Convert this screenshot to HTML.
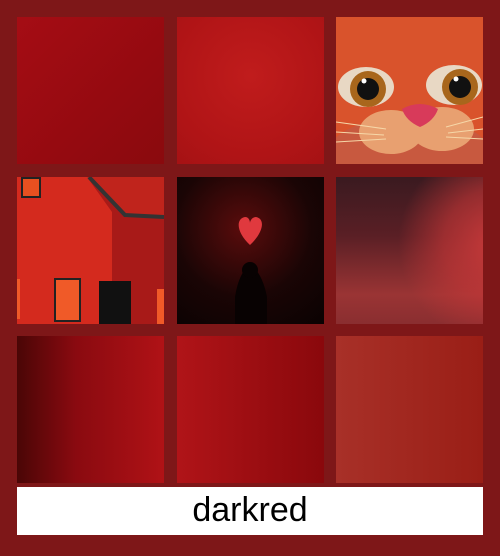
<!DOCTYPE html><html><head><style>
body{margin:0;width:500px;height:556px;background:#7e1718;position:relative;overflow:hidden;font-family:"Liberation Sans",sans-serif}
.t{position:absolute;width:147px;height:147px;overflow:hidden}
.lb{position:absolute;left:17px;top:487px;width:466px;height:48px;background:#fff;text-align:center;font-size:34px;line-height:46px;color:#000}
</style></head><body>
<div class="t" style="left:17px;top:17px;background:linear-gradient(135deg,#a50d14,#950a10 60%,#8a0a0e)"></div>
<div class="t" style="left:177px;top:17px;background:radial-gradient(circle at 50% 40%,#c01c1c,#b01416 70%,#a51214)"></div>
<div class="t" style="left:336px;top:17px;background:#d5482c">
<svg width="147" height="147" viewBox="0 0 147 147">
<rect width="147" height="147" fill="#d9532c"/>
<ellipse cx="73" cy="135" rx="80" ry="35" fill="#c8593f"/>
<ellipse cx="30" cy="70" rx="28" ry="20" fill="#e8d8c4"/>
<ellipse cx="118" cy="68" rx="28" ry="20" fill="#e8d8c4"/>
<circle cx="32" cy="72" r="18" fill="#a8661c"/><circle cx="32" cy="72" r="11" fill="#111"/><circle cx="28" cy="64" r="2.5" fill="#fff"/>
<circle cx="124" cy="70" r="18" fill="#a8661c"/><circle cx="124" cy="70" r="11" fill="#111"/><circle cx="120" cy="62" r="2.5" fill="#fff"/>
<ellipse cx="55" cy="115" rx="32" ry="22" fill="#e8a070"/><ellipse cx="106" cy="112" rx="32" ry="22" fill="#e8a070"/>
<path d="M66 92 Q84 82 102 92 Q98 104 84 110 Q70 104 66 92Z" fill="#d83a5a"/>
<path d="M0 105 L50 112 M0 115 L48 118 M0 125 L50 122 M147 100 L110 110 M147 112 L112 116 M147 122 L110 120" stroke="#f6d7a8" stroke-width="1"/>
</svg></div>

<div class="t" style="left:17px;top:177px;background:#d8281e">
<svg width="147" height="147" viewBox="0 0 147 147">
<rect width="147" height="147" fill="#d42a1e"/>
<path d="M70 0 L147 0 L147 40 L110 38 Z" fill="#c0241c"/>
<path d="M70 0 L106 38 L147 40 L147 147 L95 147 L95 35 Z" fill="#a81a18"/>
<path d="M72 0 L108 38 L147 40" stroke="#333" stroke-width="4" fill="none"/>
<rect x="5" y="1" width="18" height="19" fill="#e85020" stroke="#222" stroke-width="2"/>
<rect x="38" y="102" width="25" height="42" fill="#f05a28" stroke="#222" stroke-width="2"/>
<rect x="82" y="104" width="32" height="43" fill="#111"/>
<rect x="140" y="112" width="7" height="35" fill="#f05a28"/>
<rect x="0" y="102" width="3" height="40" fill="#f05a28"/>
</svg></div>
<div class="t" style="left:177px;top:177px;background:radial-gradient(circle at 45% 35%,#5a0c0c,#1a0505 55%,#0a0202)">
<svg width="147" height="147" viewBox="0 0 147 147">
<path d="M73 68 C60 56 58 42 68 40 C72 40 73 44 73 46 C73 44 75 40 79 40 C89 42 86 56 73 68Z" fill="#e0393e"/>
<path d="M58 147 L58 120 Q62 95 73 88 Q85 95 90 120 L90 147Z" fill="#080202"/>
<circle cx="73" cy="93" r="8" fill="#080202"/>
</svg></div>
<div class="t" style="left:336px;top:177px;background:radial-gradient(circle at 110% 45%,rgba(210,60,60,.9) 0,rgba(200,55,55,.6) 30%,transparent 55%),linear-gradient(180deg,#3a1a20,#5a1f25 40%,#9a3434 80%,#8a2e30)"></div>

<div class="t" style="left:17px;top:336px;background:linear-gradient(90deg,#4a0606,#8a0a10 40%,#b01216 100%)"></div>
<div class="t" style="left:177px;top:336px;background:linear-gradient(90deg,#b01418,#8a080c)"></div>
<div class="t" style="left:336px;top:336px;background:linear-gradient(90deg,#a83028,#9a1e16)"></div>
<div class="lb">darkred</div>
</body></html>
